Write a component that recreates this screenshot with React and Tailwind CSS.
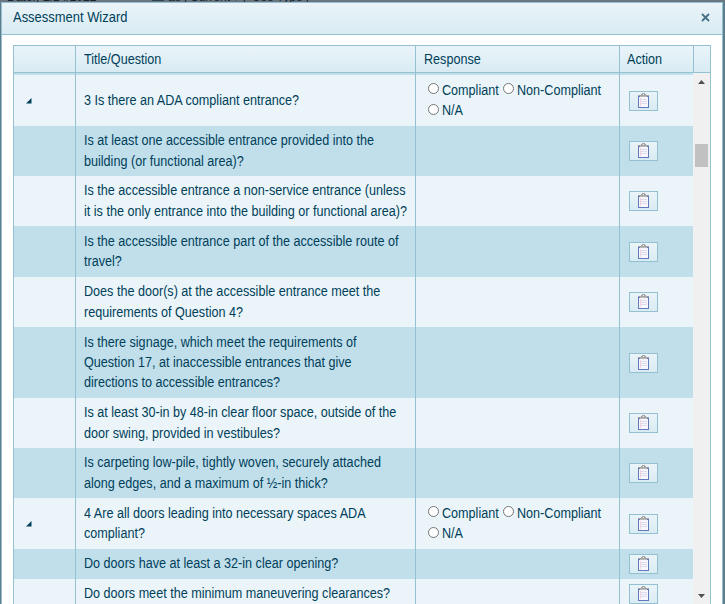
const rows = [
  { h: 51, lines: ['3 Is there an ADA compliant entrance?'], parent: true },
  { h: 50, lines: ['Is at least one accessible entrance provided into the', 'building (or functional area)?'] },
  { h: 50, lines: ['Is the accessible entrance a non-service entrance (unless', 'it is the only entrance into the building or functional area)?'] },
  { h: 51, lines: ['Is the accessible entrance part of the accessible route of', 'travel?'] },
  { h: 50, lines: ['Does the door(s) at the accessible entrance meet the', 'requirements of Question 4?'] },
  { h: 71, lines: ['Is there signage, which meet the requirements of', 'Question 17, at inaccessible entrances that give', 'directions to accessible entrances?'] },
  { h: 50, lines: ['Is at least 30-in by 48-in clear floor space, outside of the', 'door swing, provided in vestibules?'] },
  { h: 50, lines: ['Is carpeting low-pile, tightly woven, securely attached', 'along edges, and a maximum of ½-in thick?'] },
  { h: 51, lines: ['4 Are all doors leading into necessary spaces ADA', 'compliant?'], parent: true },
  { h: 30, lines: ['Do doors have at least a 32-in clear opening?'] },
  { h: 30, lines: ['Do doors meet the minimum maneuvering clearances?'] },
];

const columns = 'grid grid-cols-[61px_340px_204px_74px]';
const narrow = 'origin-left scale-x-[0.9]';

function Clipboard() {
  return (
    <svg width="11" height="16" viewBox="0 0 11 16" shapeRendering="crispEdges">
      <path d="M0 3h11v12H0z" fill="#6079bb" />
      <path d="M1 4h9v10H1z" fill="#f6f6fc" />
      <path d="M3 6.5h6M3 8.5h6M3 10.5h6" stroke="#dcdcee" />
      <path d="M2.5 5v8" stroke="#f0d3dc" />
      <path d="M0 2h3V1h1V0h3v1h1v1h3v1H0z" fill="#a3a5a7" />
      <path d="M2 3h7v1H2z" fill="#bab9b6" />
      <path d="M5 1h1v1H5z" fill="#eef2f4" />
    </svg>
  );
}

function Radio({ label, width }) {
  return (
    <label className={`flex items-center gap-[3px] ${width}`}>
      <span className="size-[11px] shrink-0 -translate-y-px rounded-full border border-[#767676] bg-white" />
      <span className={narrow}>{label}</span>
    </label>
  );
}

function Row({ row, alt }) {
  return (
    <div className={`${columns} ${alt ? 'bg-[#c1deeb]' : 'bg-[#eaf4f9]'}`} style={{ height: row.h }}>
      <div className="flex items-center pl-3">
        {row.parent && (
          <svg width="6" height="6" viewBox="0 0 6 6"><path d="M5.5 0v5.5H0z" fill="#003f59" /></svg>
        )}
      </div>
      <div className="flex flex-col justify-center border-l border-[#94c0d2] pb-px pl-2 leading-[20.2px]">
        {row.lines.map((line) => <div key={line} className={narrow}>{line}</div>)}
      </div>
      <div className="flex flex-col justify-center border-l border-[#94c0d2] pb-px pl-3 leading-[20.2px]">
        {row.parent && (
          <>
            <div className="flex"><Radio label="Compliant" width="w-[75px]" /><Radio label="Non-Compliant" width="w-[110px]" /></div>
            <Radio label="N/A" width="w-[50px]" />
          </>
        )}
      </div>
      <div className="flex items-center border-l border-[#94c0d2] pl-[9px]">
        <button className="flex h-5 w-[29px] items-center justify-center border border-[#94c0d2] bg-linear-to-b from-[#eaf4f9] to-[#d9ebf3]">
          <Clipboard />
        </button>
      </div>
    </div>
  );
}

export default function App() {
  return (
    <div className="relative flex h-[604px] w-[725px] flex-col overflow-hidden bg-[#5f7d8a] pt-[2px] pl-px font-['Liberation_Sans',Arial,sans-serif] text-[14px] whitespace-nowrap text-[#003f59]">
      <div className="absolute inset-x-0 top-0 h-[2px] overflow-hidden bg-[#6b7780] text-[12px] leading-[13px] text-[#14242c]">
        <span className="absolute top-[-9px] left-[7px]">Date:</span>
        <span className="absolute top-[-9px] left-[36px]">|</span>
        <span className="absolute top-[-9px] left-[43px]">2/24/2022</span>
        <span className="absolute top-0 left-[152px] h-px w-3 bg-[#2c4550]" />
        <span className="absolute top-[-9px] left-[168px]">as |</span>
        <span className="absolute top-[-9px] left-[190px]">Current ▾ |</span>
        <span className="absolute top-[-9px] left-[252px]">Use Type |</span>
      </div>
      <section className="flex h-[620px] w-[722px] shrink-0 flex-col border border-[#94c0d2] bg-white">
        <header className="flex h-8 shrink-0 items-center justify-between border-b border-[#94c0d2] bg-linear-to-b from-[#eaf4f9] to-[#d9ebf3] pr-3 pb-[2px] pl-[11px]">
          <h1 className="origin-left scale-x-[0.925]">Assessment Wizard</h1>
          <svg width="9" height="9" viewBox="0 0 9 9"><path d="m1 1 7 7m0-7-7 7" stroke="#457085" strokeWidth="1.8" /></svg>
        </header>
        <main className="mt-[10px] ml-[11px] w-[698px] border border-[#94c0d2]">
          <div className="flex h-[27px] border-b border-[#94c0d2] bg-linear-to-b from-[#eaf4f9] to-[#d9ebf3]">
            <div className={`${columns} items-stretch`}>
              <div />
              <div className="flex items-center border-l border-[#94c0d2] pl-2"><span className={narrow}>Title/Question</span></div>
              <div className="flex items-center border-l border-[#94c0d2] pl-2"><span className={narrow}>Response</span></div>
              <div className="flex items-center border-l border-[#94c0d2] pl-[7px]"><span className={narrow}>Action</span></div>
            </div>
            <div className="w-px bg-[#94c0d2]" />
          </div>
          <div className="flex h-[531px] overflow-hidden">
            <div>
              <div className={`${columns} h-[2px] bg-[#c1deeb]`}>
                <i /><i className="border-l border-[#94c0d2]" /><i className="border-l border-[#94c0d2]" /><i className="border-l border-[#94c0d2]" />
              </div>
              {rows.map((row, i) => <Row key={row.lines[0]} row={row} alt={i % 2 === 1} />)}
            </div>
            <div className="flex flex-1 flex-col items-center bg-[#f0f0f0]">
              <svg className="mt-[7px]" width="7" height="4" viewBox="0 0 7 4"><path d="M0 4 3.5 0 7 4z" fill="#505050" /></svg>
              <div className="mt-[60px] h-[23px] w-[13px] bg-[#c1c1c1]" />
              <svg className="mt-[427px] shrink-0" width="7" height="4" viewBox="0 0 7 4"><path d="M0 0h7L3.5 4z" fill="#505050" /></svg>
            </div>
          </div>
        </main>
      </section>
    </div>
  );
}
